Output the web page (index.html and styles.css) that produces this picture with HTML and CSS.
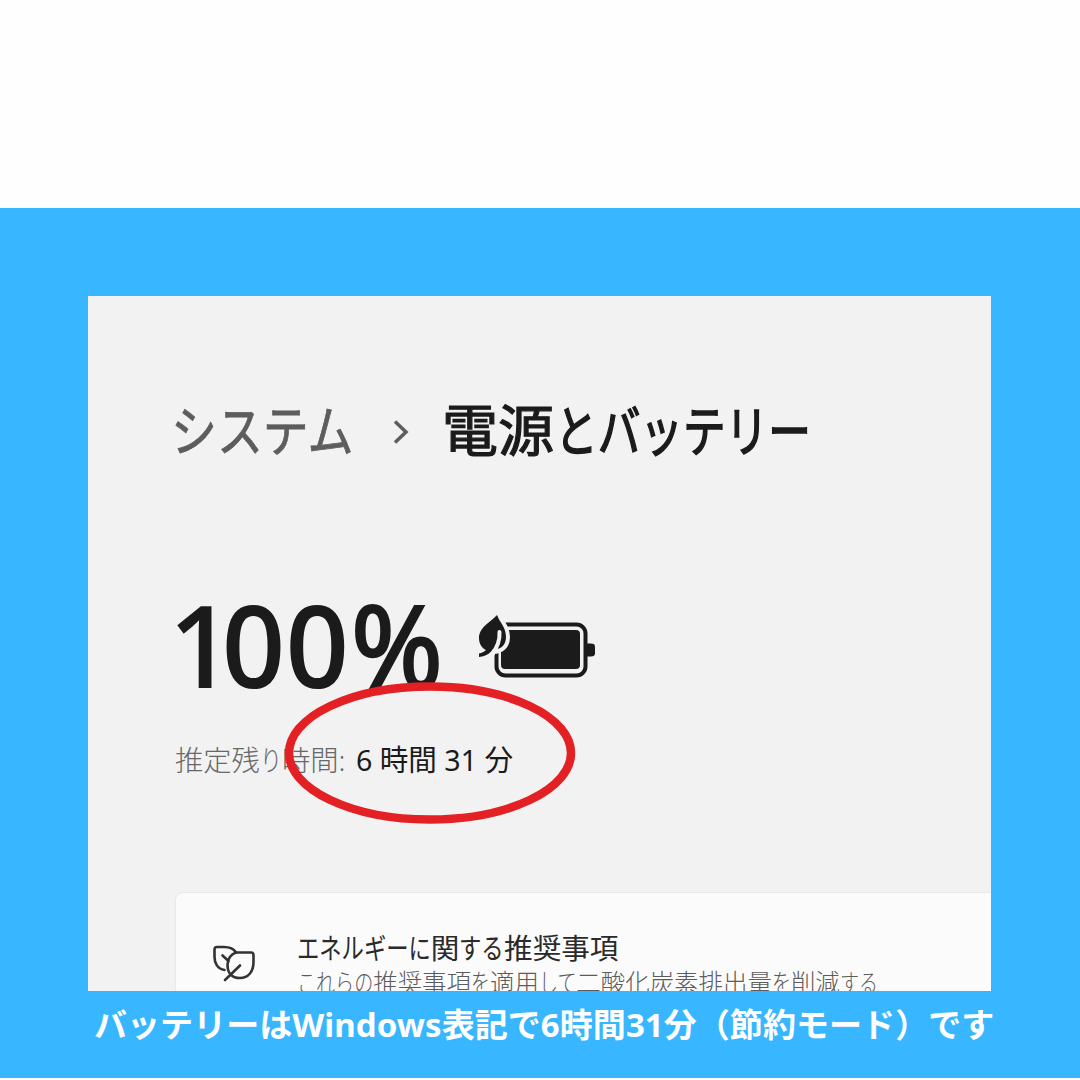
FILE: index.html
```
<!DOCTYPE html>
<html lang="ja">
<head>
    <meta charset="UTF-8">
    <meta name="viewport" content="width=device-width, initial-scale=1.0">
    <title>電源とバッテリー</title>
    <link rel="stylesheet" href="styles.css">
</head>
<body>
    <div class="frame">
        <main class="settings">
            <h1 class="breadcrumb">
                <span class="crumb"><span class="fit">システム</span></span>
                <svg class="chevron" viewBox="0 0 16 24"><path d="M2 1.500l11 10.500l-11 10.500"/></svg>
                <span class="current-kanji">電源</span>
                <span class="current-kana"><span class="fit">とバッテリー</span></span>
            </h1>

            <div class="level">
                <span class="percent"><span class="fit"><span class="one">1</span>00<span class="sign">%</span></span></span>
                <svg class="battery" viewBox="478 610 120 70">
                    <rect class="case" x="496.500" y="624.500" width="89" height="51" rx="9"/>
                    <rect class="charge" x="501" y="630" width="79" height="39" rx="4"/>
                    <path class="charge" d="M587 643.500h4q4 0 4 3v7q0 3-4 3h-4z"/>
                    <path class="leaf-gap" d="M497 615C491 622 479 627 479 638C479 644 482 648 486 649C484 652 482 653 479 654V657C486 657 491 655 493 650C501 650 506 645 506 637C506 627 500 623 497 615Z"/>
                    <path class="charge" d="M497 615C491 622 479 627 479 638C479 644 482 648 486 650C484 652 482 653 479 653.500V657C488 656 491 652 493 649C501 650 506 645 506 637C506 627 500 623 497 615Z"/>
                    <path class="leaf-vein" d="M499.500 632C500 641 497 648 492 654"/>
                </svg>
            </div>

            <p class="estimate">
                <span class="label">推定残<span class="kana kana-1">り</span>時間:</span>
                <span class="value"><span class="fit">6 時間 31 分</span></span>
            </p>

            <section class="card">
                <svg class="leaves" viewBox="212 942 46 42">
                    <path d="M224.500 970C217.500 969 214.500 963 214.500 957V949.500Q214.500 947 217 947H224C230 947 234 949 236 952.500"/>
                    <path d="M236 952.500H251Q253.500 952.500 253.500 955V962C253.500 972 248 978 240 978C232 978 227.500 973 227.500 965C227.500 959 231 954 236 952.500Z"/>
                    <path d="M222.500 955.500L228.500 961M240 965.500L225 980"/>
                </svg>
                <div class="card-text">
                    <h2 class="card-title"><span class="kana kana-6">エネルギーに</span>関<span class="kana kana-2">する</span>推奨事項</h2>
                    <p class="card-note"><span class="kana kana-4">これらの</span>推奨事項<span class="kana kana-1">を</span>適用<span class="kana kana-2">して</span>二酸化炭素排出量<span class="kana kana-1">を</span>削減<span class="kana kana-2">する</span></p>
                </div>
            </section>

            <svg class="marker" viewBox="0 0 292 144"><ellipse cx="146" cy="72" rx="141" ry="66.500"/></svg>
        </main>
        <p class="caption">バッテリーはWindows表記で6時間31分（節約モード）です</p>
    </div>
</body>
</html>
```
FILE: styles.css
```
* {
    box-sizing: border-box;
}
body {
    margin: 0;
    height: 1080px;
    padding: 208px 0 2px;
    background-color: #fefefe;
    font-family: "Noto Sans", "Noto Sans CJK JP", sans-serif;
    overflow: hidden;
}
h1, h2, p {
    margin: 0;
    font-weight: normal;
}
.fit {
    display: inline-block;
    white-space: nowrap;
    transform-origin: left center;
}
/* narrow kana, the margin takes back the width lost in scaling */
.kana {
    display: inline-block;
    transform: scaleX(0.78);
    transform-origin: left center;
}
.kana-1 {
    margin-right: -0.22em;
}
.kana-2 {
    margin-right: -0.44em;
}
.kana-4 {
    margin-right: -0.88em;
}
.kana-6 {
    margin-right: -1.32em;
}
.frame {
    height: 870px;
    padding: 88px 88px 0;
    background-color: #38b6ff;
}
.settings {
    position: relative;
    width: 903px;
    height: 695px;
    padding: 91px 0 0 87px;
    background-color: #f2f2f2;
    color: #1b1b1b;
    overflow: hidden;
}
.breadcrumb {
    display: flex;
    align-items: center;
    height: 80px;
    font-family: "Noto Sans CJK JP", sans-serif;
    font-size: 55px;
    line-height: 80px;
}
.crumb {
    width: 219px;
    margin-left: -4px;
    color: #5d5d5d;
    -webkit-text-stroke: 0.8px #5d5d5d;
}
.crumb .fit {
    transform: scaleX(0.835);
}
.chevron {
    width: 16px;
    height: 24px;
    margin: 10px 33px 0 3px;
    fill: none;
    stroke: #5d5d5d;
    stroke-width: 3.5;
}
.current-kanji {
    width: 114px;
    font-size: 56px;
    -webkit-text-stroke: 1.2px #1b1b1b;
}
.current-kana {
    width: 255px;
    -webkit-text-stroke: 1.6px #1b1b1b;
}
.current-kana .fit {
    margin-left: -1px;
    transform: scaleX(0.775);
}
.level {
    display: flex;
    align-items: flex-start;
    height: 150px;
    margin-top: 112px;
}
.percent {
    width: 303px;
    height: 150px;
    font-family: "Open Sans", sans-serif;
    font-size: 114px;
    font-weight: 600;
    line-height: 130px;
}
.percent .fit {
    margin-left: -6px;
    transform: scaleX(0.975);
}
.one {
    letter-spacing: -11px;
}
.sign {
    margin-left: 2px;
    font-weight: 400;
    -webkit-text-stroke: 3px #1b1b1b;
}
.battery {
    width: 120px;
    height: 70px;
    margin-top: 31px;
}
.case {
    fill: none;
    stroke: #1b1b1b;
    stroke-width: 4;
}
.charge {
    fill: #1b1b1b;
}
.leaf-gap {
    fill: #f2f2f2;
    stroke: #f2f2f2;
    stroke-width: 8;
}
.leaf-vein {
    fill: none;
    stroke: #f2f2f2;
    stroke-width: 4;
    stroke-linecap: round;
}
.estimate {
    display: flex;
    height: 40px;
    margin-top: 11px;
    font-size: 29px;
    line-height: 40px;
}
.label {
    width: 181px;
    color: #686868;
    font-size: 28.3px;
    font-weight: 300;
    white-space: nowrap;
}
.value .fit {
    transform: scaleX(0.985);
}
.card {
    display: flex;
    width: 850px;
    height: 160px;
    margin-top: 112px;
    padding: 34px 0 0 36px;
    border: 1px solid #e8e8e8;
    border-radius: 8px;
    background-color: #fbfbfb;
}
.leaves {
    flex: none;
    width: 46px;
    height: 42px;
    margin-top: 15px;
    fill: none;
    stroke: #333;
    stroke-width: 2.6;
    stroke-linecap: round;
    stroke-linejoin: round;
}
.card-text {
    margin-left: 39px;
    font-family: "Noto Sans CJK JP", sans-serif;
    white-space: nowrap;
}
.card-title {
    height: 40px;
    color: #2a2a2a;
    font-size: 28.6px;
    line-height: 40px;
}
.card-note {
    height: 30px;
    color: #5c5c5c;
    font-size: 24.45px;
    font-weight: 300;
    line-height: 30px;
}
/* hand-drawn ring around the remaining time */
.marker {
    position: absolute;
    left: 196px;
    top: 385px;
    width: 292px;
    height: 144px;
    fill: none;
    stroke: #e32023;
    stroke-width: 8.5;
}
.caption {
    height: 60px;
    margin-top: 4px;
    padding-left: 6px;
    color: #fff;
    font-size: 33px;
    font-weight: 700;
    letter-spacing: 0.06px;
    line-height: 60px;
    white-space: nowrap;
}
```
